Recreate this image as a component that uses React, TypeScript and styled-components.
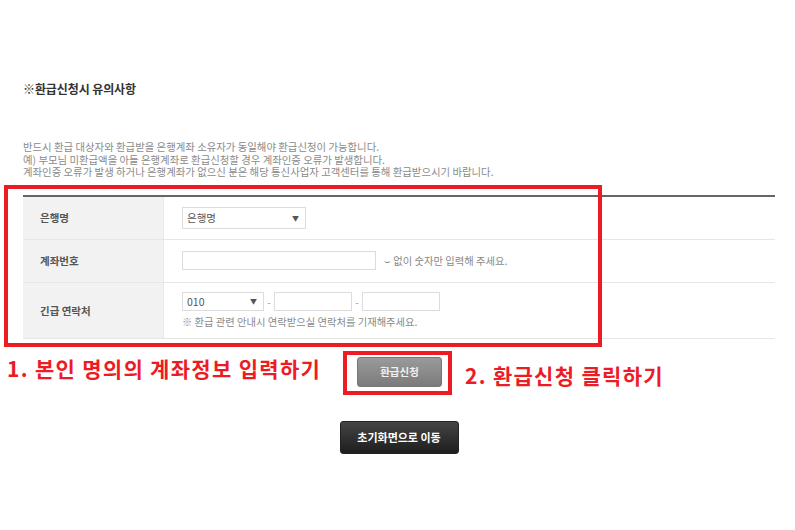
import React from "react";
import styled, { createGlobalStyle } from "styled-components";

const Global = createGlobalStyle`
  html, body { margin: 0; padding: 0; background: #fff; }
  body { font-family: "Noto Sans CJK KR", "Noto Sans", sans-serif; width: 795px; height: 530px; overflow: hidden; }
  * { box-sizing: border-box; }
`;

const Page = styled.div`
  width: 795px;
  padding: 81px 20px 0 23px;
`;

const Title = styled.h3`
  margin: 0;
  font-size: 12px;
  line-height: 16px;
  font-weight: 700;
  color: #333;
  letter-spacing: -0.1px;
`;

const Notes = styled.div`
  margin-top: 44px;
  font-size: 10.4px;
  line-height: 12.5px;
  color: #8a8a8a;
`;

const NoteLine = styled.p`
  margin: 0;
  height: 12.5px;
`;

const TableWrap = styled.div`
  position: relative;
  margin-top: 16px;
`;

const Table = styled.div`
  border-top: 2px solid #666;
  width: 752px;
`;

const Row = styled.div<{ $h: number }>`
  display: grid;
  grid-template-columns: 141px 1fr;
  height: ${(p) => p.$h}px;
  border-bottom: 1px solid #e6e6e6;
`;

const Label = styled.div`
  background: #f2f2f2;
  border-right: 1px solid #e9e9e9;
  display: flex;
  align-items: center;
  padding-left: 17px;
  font-size: 10.5px;
  font-weight: 700;
  color: #555;
`;

const Cell = styled.div`
  display: flex;
  flex-direction: column;
  justify-content: center;
  padding-left: 18px;
  gap: 3px;
`;

const Line = styled.div<{ $gap: number }>`
  display: flex;
  align-items: center;
  gap: ${(p) => p.$gap}px;
`;

const Select = styled.div<{ $w: number; $h: number }>`
  width: ${(p) => p.$w}px;
  height: ${(p) => p.$h}px;
  border: 1px solid #dcdcdc;
  display: flex;
  align-items: center;
  justify-content: space-between;
  padding: 0 6px 0 4px;
  font-size: 10.5px;
  color: #555;
  background: #fff;
`;

const Arrow = styled.span`
  font-size: 7px;
  color: #555;
`;

const Input = styled.div<{ $w: number }>`
  width: ${(p) => p.$w}px;
  height: 19px;
  border: 1px solid #dcdcdc;
  background: #fff;
`;

const Hint = styled.span`
  font-size: 10.3px;
  color: #8a8a8a;
`;

const Dash = styled.span`
  font-size: 10px;
  color: #999;
  width: 6px;
  text-align: center;
`;

const RedFrame = styled.div<{ $l: number; $t: number; $w: number; $h: number }>`
  position: absolute;
  left: ${(p) => p.$l}px;
  top: ${(p) => p.$t}px;
  width: ${(p) => p.$w}px;
  height: ${(p) => p.$h}px;
  border: 4px solid #ed1c24;
  pointer-events: none;
`;

const ButtonRow = styled.div`
  position: relative;
  display: flex;
  justify-content: center;
  margin-top: 18px;
  padding-left: 1px;
`;

const GrayButton = styled.button`
  width: 85px;
  height: 30px;
  border: 1px solid #777;
  border-radius: 3px;
  background: linear-gradient(#9a9a9a, #7b7b7b);
  color: #f0f0f0;
  font-family: inherit;
  font-size: 10.5px;
  font-weight: 700;
  padding: 0;
`;

const DarkRow = styled.div`
  display: flex;
  justify-content: center;
  margin-top: 34px;
`;

const DarkButton = styled.button`
  width: 119px;
  height: 33px;
  border: 1px solid #222;
  border-radius: 3px;
  background: linear-gradient(#444, #1e1e1e);
  color: #fff;
  font-family: inherit;
  font-size: 11px;
  font-weight: 700;
  padding: 0;
`;

const RedText = styled.div<{ $l: number; $t: number }>`
  position: absolute;
  left: ${(p) => p.$l}px;
  top: ${(p) => p.$t}px;
  color: #ed1c24;
  font-size: 21px;
  font-weight: 700;
  letter-spacing: 1.3px;
  white-space: nowrap;
  line-height: 26px;
`;

export default function App() {
  return (
    <>
      <Global />
      <Page>
        <Title>※환급신청시 유의사항</Title>
        <Notes>
          <NoteLine>반드시 환급 대상자와 환급받을 은행계좌 소유자가 동일해야 환급신청이 가능합니다.</NoteLine>
          <NoteLine>예) 부모님 미환급액을 아들 은행계좌로 환급신청할 경우 계좌인증 오류가 발생합니다.</NoteLine>
          <NoteLine>계좌인증 오류가 발생 하거나 은행계좌가 없으신 분은 해당 통신사업자 고객센터를 통해 환급받으시기 바랍니다.</NoteLine>
        </Notes>
        <TableWrap>
          <Table>
            <Row $h={43}>
              <Label>은행명</Label>
              <Cell>
                <Select $w={124} $h={22}>
                  <span>은행명</span>
                  <Arrow>▼</Arrow>
                </Select>
              </Cell>
            </Row>
            <Row $h={43}>
              <Label>계좌번호</Label>
              <Cell>
                <Line $gap={8}>
                  <Input $w={194} />
                  <Hint>⌣ 없이 숫자만 입력해 주세요.</Hint>
                </Line>
              </Cell>
            </Row>
            <Row $h={56}>
              <Label>긴급 연락처</Label>
              <Cell>
                <Line $gap={2}>
                  <Select $w={82} $h={19}>
                    <span>010</span>
                    <Arrow>▼</Arrow>
                  </Select>
                  <Dash>-</Dash>
                  <Input $w={78} />
                  <Dash>-</Dash>
                  <Input $w={78} />
                </Line>
                <Hint>※ 환급 관련 안내시 연락받으실 연락처를 기재해주세요.</Hint>
              </Cell>
            </Row>
          </Table>
          <RedFrame $l={-19} $t={-10} $w={598} $h={162} />
        </TableWrap>
        <ButtonRow>
          <GrayButton>환급신청</GrayButton>
          <RedFrame $l={320} $t={-6} $w={109} $h={44} />
          <RedText $l={-16} $t={-2}>1. 본인 명의의 계좌정보 입력하기</RedText>
          <RedText $l={442} $t={5}>2. 환급신청 클릭하기</RedText>
        </ButtonRow>
        <DarkRow>
          <DarkButton>초기화면으로 이동</DarkButton>
        </DarkRow>
      </Page>
    </>
  );
}
